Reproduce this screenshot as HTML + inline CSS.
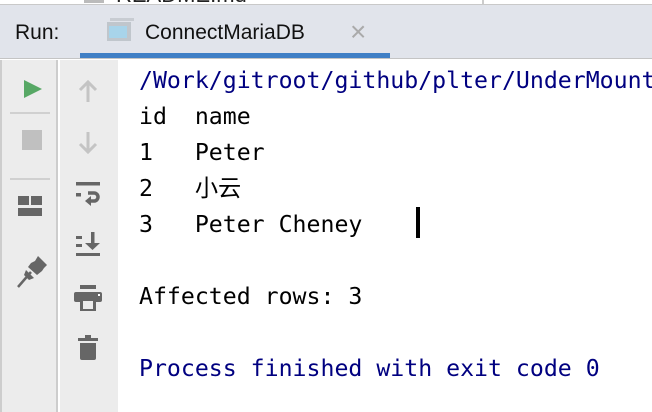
<!DOCTYPE html>
<html><head><meta charset="utf-8"><style>
*{margin:0;padding:0;box-sizing:border-box}
body{width:652px;height:412px;overflow:hidden;background:#fff;position:relative;font-family:"Liberation Sans",sans-serif}
.top{position:absolute;left:0;top:0;width:652px;height:5px;background:#fff;border-bottom:1px solid #c9c9c9;overflow:hidden}
.hdr{position:absolute;left:0;top:5px;width:652px;height:54px;background:#e1e4eb;border-bottom:1px solid #c4c4c4}
.run{position:absolute;left:15px;top:16px;font-size:21px;color:#111}
.tab{position:absolute;left:145px;top:16px;font-size:21px;color:#111}
.x{position:absolute;left:350px;top:11px;font-size:28px;color:#aaa;font-weight:300}
.ul{position:absolute;left:80px;top:48px;width:310px;height:5px;background:#3f7fc5}
.tb1{position:absolute;left:0;top:60px;width:58px;height:352px;background:#ececec;border-left:2px solid #cdcdcd;border-right:2px solid #cdcdcd}
.tb2{position:absolute;left:60px;top:60px;width:58px;height:352px;background:#ececec}
.con{position:absolute;left:139px;top:63px;width:513px;overflow:hidden;font-family:"DejaVu Sans Mono","Liberation Mono","Noto Sans CJK SC",monospace;font-size:23.2px;line-height:36px;white-space:pre;color:#000}
.b{color:#000080}
svg{position:absolute}
</style></head><body>
<div class="top"><div style="position:absolute;left:84px;top:-3px;width:20px;height:6px;background:#bbb"></div><div style="position:absolute;left:116px;top:-18px;font-size:22px;color:#222">README.md</div><div style="position:absolute;left:482px;top:0;width:2px;height:5px;background:#ccc"></div></div>
<div class="hdr">
<div class="run">Run:</div>
<svg style="left:106px;top:13px" width="28" height="26"><rect x="4" y="0" width="24" height="3" fill="#c8ccd2"/><rect x="1" y="4" width="24" height="19" fill="#c0c6cc"/><rect x="3" y="8" width="18" height="12" fill="#a8d4ea"/></svg>
<div class="tab">ConnectMariaDB</div>
<div class="x">×</div>
<div class="ul"></div>
</div>
<div class="tb1">
<svg style="left:20px;top:18px" width="22" height="22"><polygon points="2,2 20,11 2,20" fill="#57a865"/></svg>
<svg style="left:18px;top:70px" width="22" height="22"><rect x="2" y="0" width="20" height="20" fill="#c0c0c0"/></svg>
<div style="position:absolute;left:8px;top:52px;width:40px;height:2px;background:#d0d0d0"></div>
<svg style="left:16px;top:136px" width="26" height="22"><rect x="0" y="0" width="11" height="9" fill="#666"/><rect x="13" y="0" width="11" height="9" fill="#666"/><rect x="0" y="12" width="24" height="8" fill="#666"/></svg>
<div style="position:absolute;left:8px;top:118px;width:40px;height:2px;background:#d0d0d0"></div>
<svg style="left:14px;top:195px" width="32" height="34"><polygon points="22,1 31,10 28,13 26,16 21,20 12,12 15,8 19,6" fill="#666"/><line x1="15" y1="17" x2="2" y2="32" stroke="#666" stroke-width="2.5"/><polygon points="10,15 18,23 13,25 8,20" fill="#666"/></svg>
</div>
<div class="tb2">
<svg style="left:18px;top:18px" width="22" height="26"><path d="M10 4V24M2 12L10 4L18 12" stroke="#c4c4c4" stroke-width="3" fill="none"/></svg>
<svg style="left:18px;top:70px" width="22" height="26"><path d="M10 2V22M2 14L10 22L18 14" stroke="#c4c4c4" stroke-width="3" fill="none"/></svg>
<svg style="left:16px;top:122px" width="28" height="26"><rect x="0" y="0" width="24" height="3.5" fill="#666"/><rect x="0" y="11" width="5" height="3.5" fill="#666"/><path d="M12 11H18A4 4 0 0 1 18 19H14" stroke="#666" stroke-width="3.5" fill="none"/><polygon points="9,19 15,14 15,24" fill="#666"/></svg>
<svg style="left:16px;top:172px" width="28" height="26"><rect x="0" y="4" width="6" height="3" fill="#666"/><rect x="0" y="12" width="6" height="3" fill="#666"/><rect x="0" y="21" width="24" height="3" fill="#666"/><rect x="15" y="0" width="3.5" height="12" fill="#666"/><polygon points="9,11 24,11 16.5,18" fill="#666"/></svg>
<svg style="left:14px;top:225px" width="30" height="28"><rect x="6" y="0" width="16" height="4" fill="#666"/><rect x="0" y="7" width="28" height="10" rx="2" fill="#666"/><rect x="6" y="13" width="16" height="13" fill="#666"/><rect x="9" y="16" width="10" height="8" fill="#ececec"/><rect x="24" y="9" width="2" height="2" fill="#fff"/></svg>
<svg style="left:18px;top:275px" width="24" height="28"><rect x="0" y="3" width="20" height="3" fill="#666"/><rect x="7" y="0" width="6" height="3" fill="#666"/><path d="M2 8H18V23A2 2 0 0 1 16 25H4A2 2 0 0 1 2 23Z" fill="#666"/></svg>
</div>
<div class="con"><span class="b">/Work/gitroot/github/plter/UnderMountain</span>
id  name
1   Peter
2   小云
3   Peter Cheney

Affected rows: 3

<span class="b">Process finished with exit code 0</span></div>
<div style="position:absolute;left:416px;top:207px;width:4px;height:31px;background:#000"></div>
</body></html>
